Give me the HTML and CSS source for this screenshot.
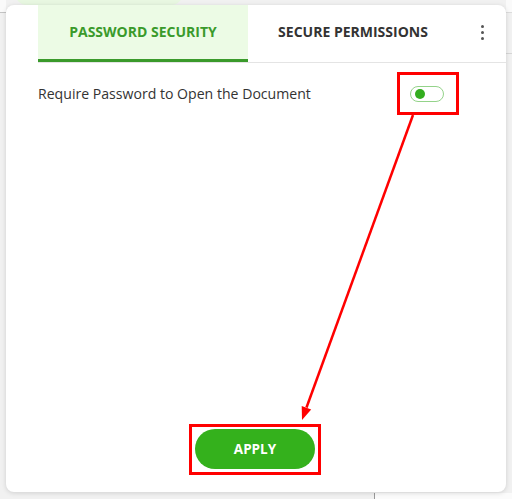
FILE: index.html
```html
<!DOCTYPE html>
<html lang="en">
<head>
    <meta charset="UTF-8">
    <title>Document Security</title>
    <link rel="stylesheet" href="styles.css">
</head>
<body>
<div class="backdrop-pill"></div>

<div class="card">
    <div class="tabs">
        <div class="tab tab-active">PASSWORD SECURITY</div>
        <div class="tab">SECURE PERMISSIONS</div>
        <div class="tab-menu">
            <span class="dot"></span>
            <span class="dot"></span>
            <span class="dot"></span>
        </div>
    </div>

    <div class="option-row">
        <span class="option-label">Require Password to Open the Document</span>
        <span class="toggle"><span class="toggle-knob"></span></span>
    </div>

    <div class="spacer"></div>

    <div class="footer">
        <button class="apply-btn">APPLY</button>
    </div>
</div>

<!-- annotation layer -->
<svg class="marks" width="512" height="499" viewBox="0 0 512 499">
    <rect x="398.5" y="73.5" width="59" height="40" fill="none" stroke="#ff0000" stroke-width="3"/>
    <rect x="190.5" y="425.5" width="129" height="48" fill="none" stroke="#ff0000" stroke-width="3"/>
    <line x1="413" y1="115" x2="306.5" y2="407.5" stroke="#ff0000" stroke-width="2.5"/>
    <polygon points="302,420 311.2,409.5 301.7,406" fill="#ff0000"/>
</svg>
</body>
</html>
```

FILE: styles.css
```css
* {
    margin: 0;
    padding: 0;
    box-sizing: border-box;
}

html, body {
    width: 512px;
    height: 499px;
    overflow: hidden;
}

body {
    position: relative;
    font-family: "Open Sans", "Noto Sans", sans-serif;
    color: #333;
    background:
        linear-gradient(#c4c4c4, #c4c4c4) 0 12px / 6px 1px no-repeat,
        linear-gradient(#fafafa, #fafafa) 0 0 / 6px 12px no-repeat,
        linear-gradient(#dcdcdc, #dcdcdc) 506px 12px / 6px 1px no-repeat,
        linear-gradient(#d6d6d6, #d6d6d6) 506px 53px / 6px 1px no-repeat,
        linear-gradient(#fafafa, #fafafa) 506px 0 / 6px 12px no-repeat,
        linear-gradient(#9a9a9a, #9a9a9a) 374px 493px / 1px 6px no-repeat,
        linear-gradient(#fbfbfb, #fbfbfb) 375px 493px / 137px 6px no-repeat,
        #f1f1f1;
    padding: 5px 6px 0 6px;
}

.backdrop-pill {
    position: absolute;
    left: 15px;
    top: -20px;
    width: 168px;
    height: 25px;
    border-radius: 12px;
    background: #e8f7e1;
}

.card {
    position: relative;
    width: 500px;
    height: 487px;
    background: #fff;
    border-radius: 8px;
    box-shadow: 0 1px 5px rgba(0, 0, 0, 0.14);
    display: flex;
    flex-direction: column;
}

.tabs {
    display: flex;
    height: 58px;
    margin-left: 32px;
    border-bottom: 1px solid #e4e4e4;
}

.tab {
    width: 210px;
    display: flex;
    align-items: center;
    justify-content: center;
    font-size: 14px;
    font-weight: 700;
    color: #333;
    padding-bottom: 4px;
}

.tab-active {
    background: #ecfbe5;
    color: #3a9a2b;
    border-bottom: 3px solid #3a9a2b;
    padding-bottom: 1px;
}

.tab-menu {
    flex: 1;
    display: flex;
    flex-direction: column;
    align-items: center;
    justify-content: center;
    gap: 3px;
    padding-bottom: 3px;
}

.dot {
    width: 3px;
    height: 3px;
    border-radius: 50%;
    background: #555;
}

.option-row {
    display: flex;
    align-items: center;
    justify-content: space-between;
    height: 62px;
    padding: 0 62px 0 32px;
}

.option-label {
    font-size: 14.1px;
    color: #333;
    margin-top: -1px;
}

.toggle {
    width: 34px;
    height: 16px;
    border: 1px solid #94d38a;
    border-radius: 8px;
    display: flex;
    align-items: center;
    padding-left: 4px;
}

.toggle-knob {
    width: 10px;
    height: 10px;
    border-radius: 50%;
    background: #33ad1f;
}

.spacer {
    flex: 1;
}

.footer {
    display: flex;
    justify-content: center;
    padding-bottom: 23px;
}

.apply-btn {
    width: 120px;
    height: 40px;
    border: none;
    border-radius: 20px;
    background: #34b11c;
    color: #fff;
    font-family: "Open Sans", "Noto Sans", sans-serif;
    font-size: 13.5px;
    font-weight: 700;
    margin-right: 2px;
}

.marks {
    position: absolute;
    left: 0;
    top: 0;
    pointer-events: none;
}
```
